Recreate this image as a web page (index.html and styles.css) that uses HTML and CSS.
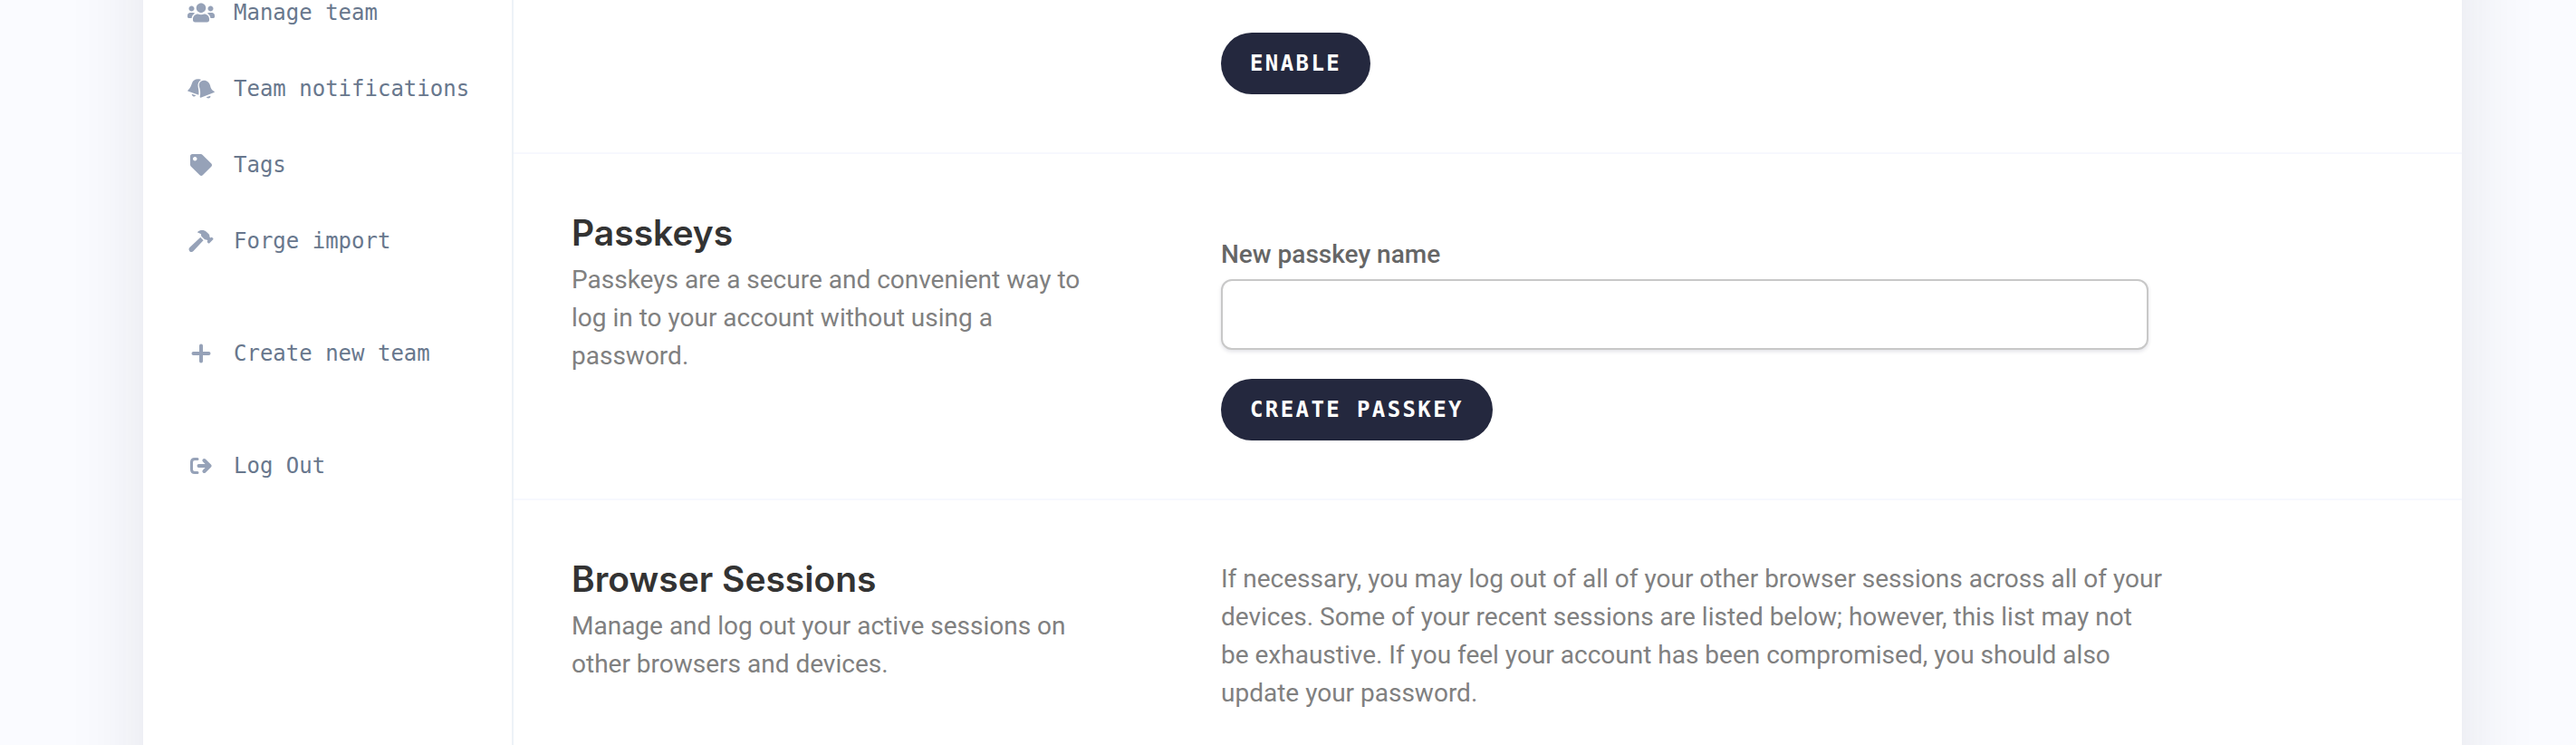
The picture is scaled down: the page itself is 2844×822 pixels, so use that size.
FILE: index.html
```html
<!DOCTYPE html>
<html lang="en">
<head>
    <meta charset="utf-8">
    <title>Profile</title>
    <link rel="stylesheet" href="styles.css">
</head>
<body>
    <div class="page">
        <div class="card">
            <nav class="sidebar">
                <ul class="menu">
                    <li>
                        <a href="#team">
                            <svg class="icon" viewBox="0 0 640 512"><path d="M96 224c35.300 0 64-28.700 64-64s-28.700-64-64-64-64 28.700-64 64 28.700 64 64 64zm448 0c35.300 0 64-28.700 64-64s-28.700-64-64-64-64 28.700-64 64 28.700 64 64 64zm32 32h-64c-17.600 0-33.500 7.100-45.100 18.600 40.300 22.100 68.900 62 75.100 109.400h66c17.700 0 32-14.300 32-32v-32c0-35.300-28.700-64-64-64zm-256 0c61.900 0 112-50.100 112-112S381.900 32 320 32 208 82.100 208 144s50.100 112 112 112zm76.800 32h-8.300c-20.800 10-43.900 16-68.500 16s-47.600-6-68.500-16h-8.300C179.600 288 128 339.600 128 403.200V432c0 26.500 21.500 48 48 48h288c26.500 0 48-21.500 48-48v-28.800c0-63.600-51.600-115.200-115.200-115.200zm-223.700-13.400C161.500 263.100 145.600 256 128 256H64c-35.300 0-64 28.700-64 64v32c0 17.700 14.300 32 32 32h65.900c6.300-47.400 34.900-87.300 75.200-109.400z"/></svg>
                            Manage team
                        </a>
                    </li>
                    <li>
                        <a href="#notifications">
                            <svg class="icon" viewBox="0 -3 90 72"><path d="M1 38C10 30 12 22 15 14C18 4 28-1 38 1C41 1 43 2 45 3C37 8 33 17 35 27C37 36 38 46 37 53L3 41C0 40 0 39 1 38zM41 60C44 48 42 36 39 26C36 14 43 6 53 5C64 4 73 12 75 22C77 32 80 37 89 42C90 43 90 44 88 45L44 62C42 62 41 61 41 60zM14 50l14 5c-3 6-13 4-14-5zM62 61l14-5c2 8-9 11-14 5z"/></svg>
                            Team notifications
                        </a>
                    </li>
                    <li>
                        <a href="#tags">
                            <svg class="icon" viewBox="0 0 512 512"><path d="M0 252.118V48C0 21.490 21.490 0 48 0h204.118a48 48 0 0 1 33.941 14.059l211.882 211.882c18.744 18.745 18.744 49.137 0 67.882L293.823 497.941c-18.745 18.744-49.137 18.744-67.882 0L14.059 286.059A48 48 0 0 1 0 252.118zM112 64c-26.510 0-48 21.490-48 48s21.490 48 48 48 48-21.490 48-48-21.490-48-48-48z"/></svg>
                            Tags
                        </a>
                    </li>
                    <li>
                        <a href="#import">
                            <svg class="icon" viewBox="0 0 576 512"><path d="M571.310 193.940l-22.630-22.630c-6.250-6.250-16.380-6.250-22.630 0l-11.310 11.310-28.900-28.900c5.630-21.310.36-44.900-16.350-61.610l-45.250-45.250c-62.480-62.480-163.790-62.480-226.280 0l90.510 45.250v18.750c0 16.970 6.740 33.250 18.750 45.250l49.140 49.140c16.710 16.710 40.300 21.980 61.610 16.350l28.900 28.900-11.310 11.310c-6.250 6.250-6.250 16.380 0 22.630l22.630 22.630c6.250 6.250 16.380 6.250 22.630 0l90.510-90.510c6.230-6.240 6.230-16.370-.02-22.620zm-286.720-15.200c-3.700-3.700-6.840-7.790-9.850-11.950L19.640 404.960c-25.570 23.880-26.260 64.190-1.530 88.930s65.050 24.050 88.920-1.530l238.130-255.070c-3.960-2.910-7.900-5.870-11.440-9.410l-49.130-49.140z"/></svg>
                            Forge import
                        </a>
                    </li>
                    <li class="group">
                        <a href="#new">
                            <svg class="icon" viewBox="0 0 24 24"><path class="stroke plus" d="M12 3.500V20.500M3.500 12H20.500"/></svg>
                            Create new team
                        </a>
                    </li>
                    <li class="group">
                        <a href="#logout">
                            <svg class="icon" viewBox="0 0 24 24"><path class="stroke" d="M8 4.500H5Q1.500 4.500 1.500 8V16Q1.500 19.500 5 19.500H8"/><path class="stroke plus" d="M9.500 12H20.500M15.500 6L21.500 12L15.500 18"/></svg>
                            Log Out
                        </a>
                    </li>
                </ul>
            </nav>

            <main class="content">
                <section class="section section-first">
                    <div class="section-body">
                        <button type="button" class="button">Enable</button>
                    </div>
                </section>

                <section class="section">
                    <header>
                        <h2>Passkeys</h2>
                        <p>Passkeys are a secure and convenient way to log in to your account without using a password.</p>
                    </header>
                    <form class="section-body passkey-form">
                        <label for="passkey-name">New passkey name</label>
                        <input type="text" id="passkey-name" name="name">
                        <button type="button" class="button">Create passkey</button>
                    </form>
                </section>

                <section class="section">
                    <header>
                        <h2>Browser Sessions</h2>
                        <p>Manage and log out your active sessions on other browsers and devices.</p>
                    </header>
                    <div class="section-body section-text">
                        <p>If necessary, you may log out of all of your other browser sessions across all of your devices. Some of your recent sessions are listed below; however, this list may not be&nbsp;exhaustive. If you feel your account has been compromised, you should also update&nbsp;your password.</p>
                    </div>
                </section>
            </main>
        </div>
    </div>
</body>
</html>
```
FILE: styles.css
```css
* {
    box-sizing: border-box;
}

body {
    margin: 0;
    background: #fafbff;
    color: #808080;
    font-family: Roboto, Arial, sans-serif;
    font-size: 28px;
    line-height: 42px;
}

h2, p, ul {
    margin: 0;
    padding: 0;
}

.page {
    padding-left: 32px;
    overflow: hidden;
}

.card {
    position: relative;
    display: flex;
    max-width: 2560px;
    min-height: 100vh;
    margin: 0 auto;
    background: white;
}

/* shadow runs past the top and bottom so it stays even along the sides */
.card::before {
    content: '';
    position: absolute;
    z-index: -1;
    top: -100px;
    right: 0;
    bottom: -100px;
    left: 0;
    box-shadow: 0 0 80px rgba(30, 30, 50, 0.1);
}

.sidebar {
    flex: none;
    width: 409px;
    padding-left: 48px;
    border-right: 2px solid #edf2f7;
}

.menu {
    display: flex;
    flex-direction: column;
    gap: 56px;
    list-style: none;
}

.group {
    margin-top: 40px;
}

.menu a {
    display: flex;
    align-items: center;
    gap: 20px;
    color: #68778d;
    font-family: 'DejaVu Sans Mono', monospace;
    font-size: 24px;
    line-height: 28px;
    text-decoration: none;
    white-space: nowrap;
}

.icon {
    width: 32px;
    height: 24px;
    fill: #96a2b8;
}

.stroke {
    fill: none;
    stroke: #96a2b8;
    stroke-width: 3;
    stroke-linecap: round;
    stroke-linejoin: round;
}

.plus {
    stroke-width: 4;
}

.content {
    flex: 1;
}

.section {
    display: grid;
    grid-template-columns: repeat(3, 1fr);
    column-gap: 128px;
    padding: 64px;
    border-bottom: 2px solid #f7f8fe;
}

.section-first {
    padding-top: 36px;
}

.section:last-child {
    padding-bottom: 0;
    border-bottom: none;
}

.section-body {
    grid-column: 2 / span 2;
    max-width: 1024px;
}

.section-text {
    max-width: 1044px;
    padding-top: 2px;
}

h2 {
    margin-bottom: 8px;
    color: #333;
    font-family: Inter, sans-serif;
    font-size: 39px;
    font-weight: 600;
    line-height: 46px;
}

.passkey-form {
    display: flex;
    flex-direction: column;
    align-items: flex-start;
    width: 100%;
    padding-top: 26px;
}

label {
    margin-bottom: 6px;
    color: #666;
    font-weight: 500;
}

input {
    width: 100%;
    height: 78px;
    margin-bottom: 32px;
    padding: 0 24px;
    border: 2px solid #c8c8c8;
    border-radius: 12px;
    box-shadow: 0 2px 4px rgba(20, 20, 60, 0.12);
    color: #333;
    font: inherit;
}

.button {
    display: block;
    padding: 20px 32px;
    border: none;
    border-radius: 34px;
    background: #24283e;
    color: white;
    font-family: 'DejaVu Sans Mono', monospace;
    font-size: 24px;
    font-weight: bold;
    line-height: 28px;
    letter-spacing: 0.1em;
    text-transform: uppercase;
}
```
